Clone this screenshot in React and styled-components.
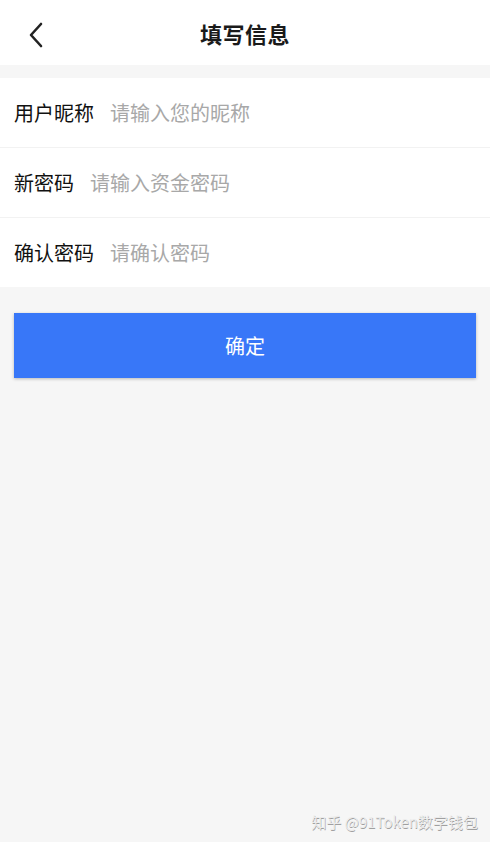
import React from "react";
import styled, { createGlobalStyle } from "styled-components";

const GlobalStyle = createGlobalStyle`
  html, body {
    margin: 0;
    padding: 0;
    background: #f6f6f6;
    font-family: "Noto Sans CJK SC", "Noto Sans", sans-serif;
  }
  #root {
    min-height: 842px;
  }
`;

const Page = styled.div`
  position: relative;
  width: 490px;
  height: 842px;
  background: #f6f6f6;
  overflow: hidden;
`;

const Header = styled.div`
  height: 65px;
  background: #fff;
  display: flex;
  align-items: center;
  justify-content: center;
  position: relative;
  margin-bottom: 13px;
`;

const Back = styled.button`
  position: absolute;
  left: 22px;
  top: 20px;
  width: 28px;
  height: 30px;
  padding: 0;
  border: none;
  background: none;
  display: flex;
  align-items: center;
  justify-content: center;
`;

const Title = styled.h1`
  margin: 0;
  font-size: 22px;
  font-weight: 700;
  color: #1a1a1a;
  letter-spacing: 0.5px;
`;

const Form = styled.div`
  background: #fff;
`;

const Row = styled.label`
  height: 69px;
  display: flex;
  align-items: center;
  padding: 0 14px;
  gap: 16px;
  border-top: ${(p) => (p.$first ? "none" : "1px solid #f2f2f2")};
`;

const Label = styled.span`
  font-size: 20px;
  color: #111;
  white-space: nowrap;
`;

const Input = styled.input`
  flex: 1;
  border: none;
  outline: none;
  padding: 0;
  font-family: inherit;
  font-size: 20px;
  color: #111;
  background: transparent;
  &::placeholder {
    color: #a8a8a8;
  }
`;

const Submit = styled.button`
  display: block;
  margin: 26px 14px 0;
  width: 462px;
  height: 65px;
  border: none;
  background: #3877f8;
  color: #fff;
  font-family: inherit;
  font-size: 20px;
  box-shadow: 0 1px 3px rgba(0, 0, 0, 0.25);
`;

const Watermark = styled.div`
  position: absolute;
  right: 12px;
  bottom: 10px;
  font-size: 15px;
  font-weight: 400;
  color: #ececec;
  text-shadow: 0.5px 0.5px 0.5px #a0a0a0;
`;

const fields = [
  { label: "用户昵称", placeholder: "请输入您的昵称", type: "text" },
  { label: "新密码", placeholder: "请输入资金密码", type: "password" },
  { label: "确认密码", placeholder: "请确认密码", type: "password" },
];

export default function App() {
  return (
    <>
      <GlobalStyle />
      <Page>
        <Header>
          <Back aria-label="back">
            <svg width="16" height="26" viewBox="0 0 16 26">
              <path
                d="M13 2 L3 13 L13 24"
                fill="none"
                stroke="#222"
                strokeWidth="2.6"
                strokeLinecap="round"
                strokeLinejoin="round"
              />
            </svg>
          </Back>
          <Title>填写信息</Title>
        </Header>
        <Form>
          {fields.map((f, i) => (
            <Row key={f.label} $first={i === 0}>
              <Label>{f.label}</Label>
              <Input type={f.type} placeholder={f.placeholder} />
            </Row>
          ))}
        </Form>
        <Submit>确定</Submit>
        <Watermark>知乎 @91Token数字钱包</Watermark>
      </Page>
    </>
  );
}
